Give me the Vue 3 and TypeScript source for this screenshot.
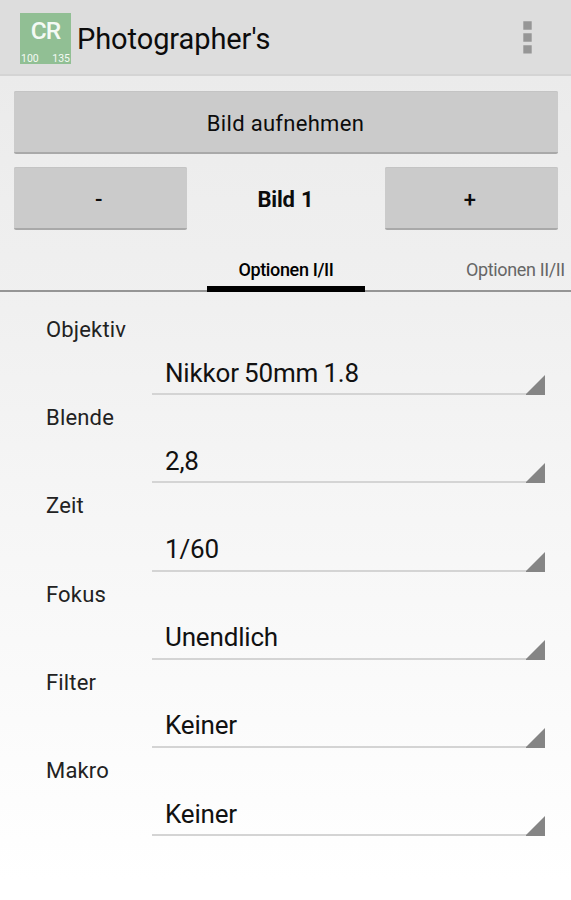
<script setup lang="ts">
import { ref } from 'vue'

interface Field {
  key: string
  label: string
  value: string
}

const frame = ref(1)
const fields: Field[] = [
  { key: 'lens', label: 'Objektiv', value: 'Nikkor 50mm 1.8' },
  { key: 'aperture', label: 'Blende', value: '2,8' },
  { key: 'time', label: 'Zeit', value: '1/60' },
  { key: 'focus', label: 'Fokus', value: 'Unendlich' },
  { key: 'filter', label: 'Filter', value: 'Keiner' },
  { key: 'macro', label: 'Makro', value: 'Keiner' },
]

function step(delta: number) {
  frame.value = Math.max(1, frame.value + delta)
}
</script>

<template>
  <div class="screen">
    <header class="bar">
      <div class="logo">
        <span class="logo-name">CR</span>
        <div class="logo-nums"><span>100</span><span>135</span></div>
      </div>
      <h1 class="title">Photographer's</h1>
      <svg class="more" width="9" height="33" viewBox="0 0 9 33">
        <path d="M0.3 0.3h8.4v8.4H0.3zM0.3 12.3h8.4v8.4H0.3zM0.3 24.3h8.4v8.2H0.3z" fill="#969696" />
      </svg>
    </header>

    <section class="controls">
      <button class="btn capture">Bild aufnehmen</button>
      <div class="stepper">
        <button class="btn sign" @click="step(-1)">-</button>
        <div class="frame">Bild {{ frame }}</div>
        <button class="btn sign" @click="step(1)">+</button>
      </div>
    </section>

    <nav class="tabs">
      <div class="tab active">Optionen I/II</div>
      <div class="tab next">Optionen II/II</div>
    </nav>

    <main class="form">
      <div v-for="f in fields" :key="f.key" class="row">
        <div class="label">{{ f.label }}</div>
        <div class="spinner">
          <span class="value">{{ f.value }}</span>
          <svg class="corner" width="19" height="20" viewBox="0 0 19 20">
            <path d="M19 0V20H0V19z" fill="#858585" />
          </svg>
        </div>
      </div>
    </main>
  </div>
</template>

<style>
body {
  margin: 0;
}
</style>

<style scoped>
.screen {
  width: 571px;
  height: 900px;
  overflow: hidden;
  box-sizing: border-box;
  font-family: Roboto, "Liberation Sans", sans-serif;
  color: #0c0c0c;
  background: linear-gradient(#ebebeb 76px, #eeeeee 200px, #f0f0f0 310px, #f5f5f5 480px, #fafafa 680px, #ffffff 880px);
}
.bar {
  display: flex;
  align-items: center;
  height: 76px;
  box-sizing: border-box;
  padding: 0 39px 0 20px;
  background: #dddddd;
  border-bottom: 2px solid #d4d4d4;
}
.logo {
  display: flex;
  flex-direction: column;
  justify-content: space-between;
  width: 51px;
  height: 51px;
  margin-top: 2px;
  background: #91bf94;
  color: #f4faf4;
}
.logo-name {
  padding-top: 4px;
  text-align: center;
  font-size: 24.5px;
  line-height: 27px;
  font-weight: 500;
  letter-spacing: -1px;
}
.logo-nums {
  display: flex;
  justify-content: space-between;
  padding: 0 1px;
  font-size: 10.5px;
  line-height: 11px;
}
.title {
  flex: 1;
  margin: 4px 0 0 6px;
  font-size: 29px;
  line-height: 36px;
  font-weight: 400;
  letter-spacing: -0.08px;
}
.more {
  margin-top: 1px;
}
.controls {
  padding: 15px 13.5px 0;
}
.btn {
  display: block;
  width: 100%;
  height: 63px;
  padding: 4px 0 0;
  border: 0;
  border-bottom: 2px solid #a9a9a9;
  border-radius: 2px;
  background: #cbcbcb;
  box-shadow: inset 0 1px #c4c4c4;
  font: 400 22px/30px Roboto, "Liberation Sans", sans-serif;
  letter-spacing: 0.3px;
  color: #0c0c0c;
}
.sign {
  padding-right: 2px;
  font-weight: 500;
}
.stepper {
  display: grid;
  grid-template-columns: 173px 1fr 173px;
  align-items: center;
  margin-top: 13px;
}
.frame {
  padding-top: 2px;
  text-align: center;
  font-size: 22px;
  font-weight: 700;
  letter-spacing: -0.2px;
  word-spacing: 1px;
}
.tabs {
  display: flex;
  height: 63px;
  margin-top: -1px;
  padding-left: 206.5px;
  background: linear-gradient(#959595, #959595) 0 100% / 100% 2px no-repeat;
  white-space: nowrap;
}
.tab {
  box-sizing: border-box;
  padding-top: 29px;
  font-size: 18px;
  line-height: 24px;
}
.tab.active {
  width: 158px;
  padding-left: 1px;
  text-align: center;
  font-weight: 500;
  letter-spacing: -0.36px;
  color: #000;
  border-bottom: 6px solid #000;
}
.tab.next {
  margin-left: 101.5px;
  letter-spacing: -0.36px;
  color: #666;
}
.form {
  display: grid;
  grid-auto-rows: 88.2px;
  padding: 15px 26px 0 46px;
}
.row {
  display: flex;
  flex-direction: column;
  justify-content: space-between;
}
.label {
  padding-top: 10px;
  font-size: 22px;
  line-height: 26px;
  letter-spacing: 0.17px;
  color: #222;
}
.spinner {
  display: flex;
  justify-content: space-between;
  align-items: flex-end;
  height: 44px;
  box-sizing: border-box;
  margin-left: 106px;
  padding-left: 13px;
  background: linear-gradient(#d4d4d4, #d4d4d4) 0 100% / 100% 2px no-repeat;
}
.value {
  padding-bottom: 6.5px;
  font-size: 26px;
  line-height: 32px;
  letter-spacing: -0.18px;
  word-spacing: -1px;
  color: #111;
}
</style>
